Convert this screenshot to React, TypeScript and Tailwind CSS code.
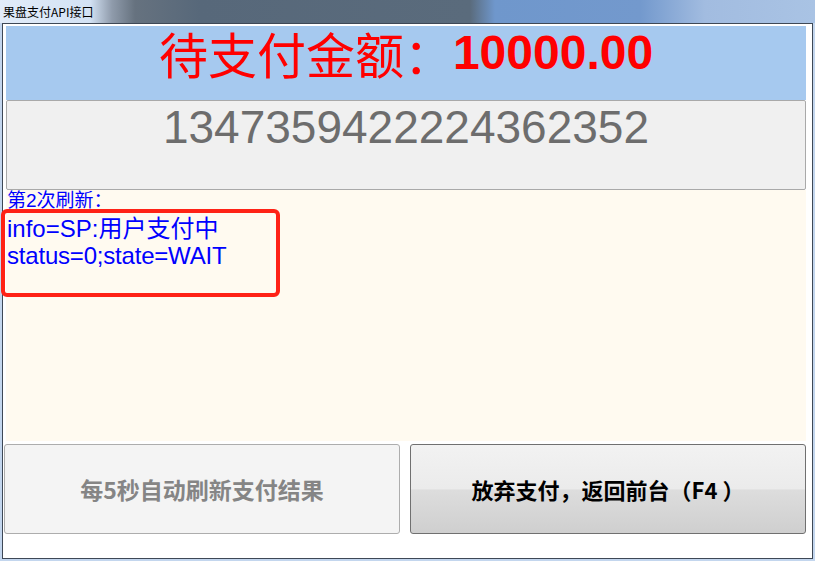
import React from 'react';

const cjk = "font-['Noto_Sans_CJK_SC',sans-serif]";
const arial = "font-['Liberation_Sans','Noto_Sans_CJK_SC',sans-serif]";

const App = () => {
  return (
    <div className="relative w-[815px] h-[561px] overflow-hidden bg-[#c3d6ee] flex flex-col">
      {/* Title bar (glass) */}
      <div className="h-[23px] shrink-0 flex items-center pl-[3px] bg-[linear-gradient(90deg,#e2ecf9_0px,#d3e2f4_90px,#8f9bab_112px,#66727f_135px,#57687a_200px,#5a6b7c_470px,#6f97cc_495px,#7399cd_640px,#a2bce0_705px,#a9c3e4_815px)]">
        <span className={`${cjk} text-[12px] leading-none text-black`}>果盘支付API接口</span>
      </div>

      {/* Window body */}
      <div className="ml-[2px] w-[811px] h-[536px] border border-[#3e4856] bg-white flex flex-col pt-[2px]">
        {/* Amount */}
        <div className="ml-[3px] w-[800px] h-[74px] bg-[#a6c9ef] flex justify-center items-start pt-[3px]">
          <span className={`${cjk} text-[49px] leading-[48px] text-[#ff0000]`}>待支付金额：</span>
          <span className={`${arial} text-[48px] leading-[48px] font-bold text-[#ff0000]`}>10000.00</span>
        </div>

        {/* Order number */}
        <div className="ml-[3px] w-[800px] h-[90px] bg-[#f0f0f0] border border-[#a9a9a9] rounded-[2px] flex justify-center pt-[3px]">
          <span className={`${arial} text-[46px] leading-[46px] text-[#6d6d6d]`}>1347359422224362352</span>
        </div>

        {/* Log area */}
        <div className={`ml-[3px] w-[800px] h-[251px] bg-[#fffaf0] pl-[1px] text-[#0000ff] ${arial}`}>
          <div className="h-[25px] text-[19px] leading-[22px]">第2次刷新：</div>
          <div className="text-[24px] leading-[27px]">info=SP:用户支付中</div>
          <div className="text-[24px] leading-[27px] tracking-[-0.2px]">status=0;state=WAIT</div>
        </div>

        {/* Buttons */}
        <div className="flex gap-[10px] pl-[1px] mt-[3px]">
          <button className={`w-[396px] h-[90px] rounded-[3px] border border-[#adadad] bg-[#f4f4f4] ${cjk} text-[23px] font-bold text-[#858585]`}>
            每5秒自动刷新支付结果
          </button>
          <button className={`w-[396px] h-[90px] rounded-[3px] border border-[#707070] bg-[linear-gradient(180deg,#f2f2f2_0%,#ebebeb_50%,#dddddd_51%,#cfcfcf_100%)] ${cjk} text-[22px] font-bold text-black`}>
            放弃支付，返回前台（F4 ）
          </button>
        </div>
      </div>

      {/* Red annotation box */}
      <div className="absolute left-[1px] top-[209px] w-[279px] h-[88px] border-[4px] border-[#ff2216] rounded-[6px]" />
    </div>
  );
};

export default App;
